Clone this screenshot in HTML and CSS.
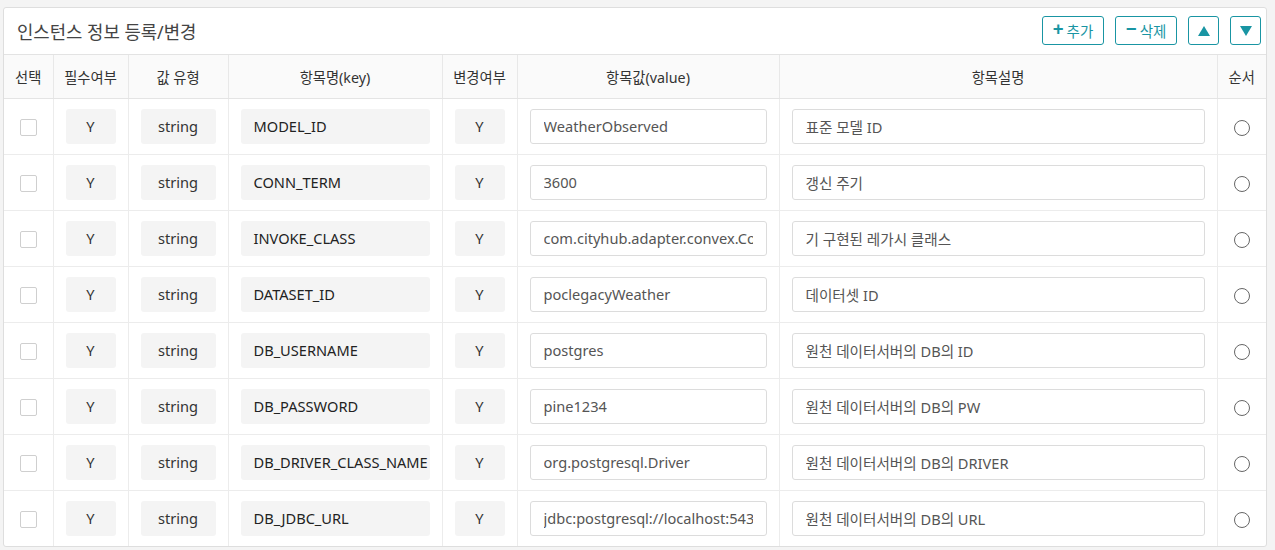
FILE: index.html
```html
<!DOCTYPE html>
<html lang="ko">

<head>
  <meta charset="UTF-8">
  <meta name="viewport" content="width=device-width, initial-scale=1.0">
  <title>인스턴스 정보 등록/변경</title>
  <link rel="stylesheet" href="styles.css">
</head>

<body>
  <div class="card">
    <div class="card-header">
      <h2 class="title">인스턴스 정보 등록/변경</h2>
      <div class="actions">
        <button class="btn btn-text"><span class="sign">+</span>추가</button>
        <button class="btn btn-text"><span class="sign">&minus;</span>삭제</button>
        <button class="btn btn-icon">
          <svg width="12" height="10" viewBox="0 0 12 10"><path d="M6 0 L12 10 L0 10 Z" fill="#1995a3"/></svg>
        </button>
        <button class="btn btn-icon">
          <svg width="12" height="10" viewBox="0 0 12 10"><path d="M0 0 L12 0 L6 10 Z" fill="#1995a3"/></svg>
        </button>
      </div>
    </div>

    <table class="grid">
      <colgroup>
        <col style="width:49px">
        <col style="width:75px">
        <col style="width:100px">
        <col style="width:214px">
        <col style="width:75px">
        <col style="width:262px">
        <col style="width:438px">
        <col style="width:49px">
      </colgroup>
      <thead>
        <tr>
          <th>선택</th>
          <th>필수여부</th>
          <th>값 유형</th>
          <th>항목명(key)</th>
          <th>변경여부</th>
          <th>항목값(value)</th>
          <th>항목설명</th>
          <th>순서</th>
        </tr>
      </thead>
      <tbody id="rows"></tbody>
    </table>
  </div>

  <script>
    const items = [
      ["MODEL_ID", "WeatherObserved", "표준 모델 ID"],
      ["CONN_TERM", "3600", "갱신 주기"],
      ["INVOKE_CLASS", "com.cityhub.adapter.convex.ConvWeatherObserved", "기 구현된 레가시 클래스"],
      ["DATASET_ID", "poclegacyWeather", "데이터셋 ID"],
      ["DB_USERNAME", "postgres", "원천 데이터서버의 DB의 ID"],
      ["DB_PASSWORD", "pine1234", "원천 데이터서버의 DB의 PW"],
      ["DB_DRIVER_CLASS_NAME", "org.postgresql.Driver", "원천 데이터서버의 DB의 DRIVER"],
      ["DB_JDBC_URL", "jdbc:postgresql://localhost:5432/postgres", "원천 데이터서버의 DB의 URL"]
    ];

    let html = "";
    for (let item of items) {
      html += `
        <tr>
          <td><span class="check"></span></td>
          <td><div class="box center">Y</div></td>
          <td><div class="box center">string</div></td>
          <td><div class="box key">${item[0]}</div></td>
          <td><div class="box center">Y</div></td>
          <td><input class="field" type="text" value="${item[1]}"></td>
          <td><input class="field" type="text" value="${item[2]}"></td>
          <td><span class="radio"></span></td>
        </tr>`;
    }
    document.getElementById("rows").innerHTML = html;
  </script>
</body>

</html>
```

FILE: styles.css
```css
* {
  box-sizing: border-box;
  margin: 0;
}

body {
  background-color: #f4f4f4;
  padding: 7px 8px 0 3px;
  font-family: "Noto Sans", "Noto Sans CJK KR", sans-serif;
  font-size: 14px;
  color: #333;
}

.card {
  background-color: #fff;
  border: 1px solid #dedede;
  border-radius: 3px;
  overflow: hidden;
}

.card-header {
  height: 47px;
  display: flex;
  align-items: center;
  justify-content: space-between;
  padding: 0 5px 0 13px;
  border-bottom: 1px solid #e3e3e3;
}

.title {
  font-size: 17.8px;
  font-weight: normal;
  color: #444;
}

.actions {
  display: flex;
  gap: 11px;
  margin-top: -1px;
}

.btn {
  height: 29px;
  border: 1.5px solid #1995a3;
  border-radius: 3px;
  background-color: #fff;
  color: #1995a3;
  font-family: inherit;
  font-size: 14.5px;
  display: flex;
  align-items: center;
  justify-content: center;
  padding: 0;
  cursor: pointer;
}

.btn-text {
  width: 62px;
}

.btn-icon {
  width: 31px;
}

.sign {
  font-size: 19px;
  font-weight: bold;
  line-height: 1;
  margin-right: 3px;
  margin-top: -2px;
}

.grid {
  width: 100%;
  table-layout: fixed;
  border-collapse: collapse;
}

.grid th {
  height: 43px;
  background-color: #fafafa;
  font-weight: normal;
  font-size: 14.3px;
  color: #333;
  border-left: 1px solid #e8e8e8;
  border-bottom: 1px solid #e4e4e4;
}

.grid th:first-child,
.grid td:first-child {
  border-left: 0;
}

.grid td {
  height: 56px;
  padding: 0 12px;
  border-left: 1px solid #ececec;
  border-top: 1px solid #ececec;
  text-align: center;
}

.grid tbody tr:first-child td {
  border-top: 0;
}

.box {
  height: 35px;
  line-height: 35px;
  background-color: #f4f4f4;
  border-radius: 3px;
  white-space: nowrap;
  overflow: hidden;
  font-size: 14.6px;
}

.center {
  text-align: center;
  padding: 0 2px;
}

.key {
  text-align: left;
  padding-left: 13px;
  color: #222;
}

.field {
  width: 100%;
  height: 35px;
  border: 1px solid #dcdcdc;
  border-radius: 3px;
  padding: 0 13px;
  font-family: inherit;
  font-size: 14.6px;
  color: #555;
  outline: 0;
}

.check {
  display: inline-block;
  width: 17px;
  height: 17px;
  border: 1.5px solid #cfcfcf;
  border-radius: 2px;
  vertical-align: middle;
}

.radio {
  display: inline-block;
  width: 16px;
  height: 16px;
  border: 1.5px solid #666;
  border-radius: 50%;
  vertical-align: middle;
}
```
